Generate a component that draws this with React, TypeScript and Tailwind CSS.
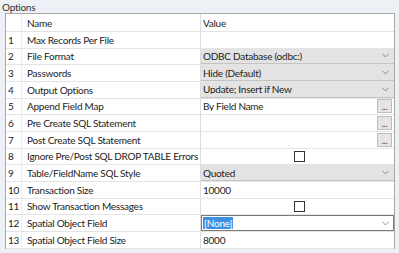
import { ChevronDown } from 'lucide-react';

type Kind = 'text' | 'combo' | 'ellipsis' | 'check' | 'focus';

interface OptionRow {
  name: string;
  value: string;
  kind: Kind;
}

const rows: OptionRow[] = [
  { name: 'Max Records Per File', value: '', kind: 'text' },
  { name: 'File Format', value: 'ODBC Database (odbc:)', kind: 'combo' },
  { name: 'Passwords', value: 'Hide (Default)', kind: 'combo' },
  { name: 'Output Options', value: 'Update; Insert if New', kind: 'combo' },
  { name: 'Append Field Map', value: 'By Field Name', kind: 'ellipsis' },
  { name: 'Pre Create SQL Statement', value: '', kind: 'ellipsis' },
  { name: 'Post Create SQL Statement', value: '', kind: 'ellipsis' },
  { name: 'Ignore Pre/Post SQL DROP TABLE Errors', value: '', kind: 'check' },
  { name: 'Table/FieldName SQL Style', value: 'Quoted', kind: 'combo' },
  { name: 'Transaction Size', value: '10000', kind: 'text' },
  { name: 'Show Transaction Messages', value: '', kind: 'check' },
  { name: 'Spatial Object Field', value: '[None]', kind: 'focus' },
  { name: 'Spatial Object Field Size', value: '8000', kind: 'text' },
];

function ValueCell({ row }: { row: OptionRow }) {
  // Combo box rows: grey fill with a chevron on the right
  if (row.kind === 'combo') {
    return (
      <div className="flex-1 h-full flex items-center bg-[#e3e3e3] border-b border-[#c4c4c4] pl-[2px] pr-[3px]">
        <span className="flex-1 truncate">{row.value}</span>
        <ChevronDown size={11} strokeWidth={1.5} className="text-[#606060]" />
      </div>
    );
  }

  // Focused combo with the text selected
  if (row.kind === 'focus') {
    return (
      <div className="flex-1 h-full flex items-center bg-white border border-[#7a7a7a] pl-[1px] pr-[2px]">
        <span className="flex-1">
          <span className="bg-[#3c8fe3] text-white px-px">{row.value}</span>
        </span>
        <ChevronDown size={11} strokeWidth={1.5} className="text-[#606060]" />
      </div>
    );
  }

  if (row.kind === 'check') {
    return (
      <div className="flex-1 h-full flex items-center justify-center pl-[4px]">
        <div className="w-[11px] h-[11px] border border-[#333] bg-white" />
      </div>
    );
  }

  if (row.kind === 'ellipsis') {
    return (
      <div className="flex-1 h-full flex items-center pl-[2px] pr-[2px]">
        <span className="flex-1 truncate">{row.value}</span>
        <div className="w-[15px] h-[14px] bg-[#e5e5e5] border border-[#bdbdbd] flex items-end justify-center text-[9px] leading-[9px] text-[#444] pb-[1px]">
          ...
        </div>
      </div>
    );
  }

  return (
    <div className="flex-1 h-full flex items-center pl-[2px]">
      <span>{row.value}</span>
    </div>
  );
}

export default function App() {
  return (
    <div className="w-[399px] h-[253px] bg-[#edf0f4] overflow-hidden font-['Lato',sans-serif] text-[10px] tracking-[-0.25px] text-[#222] leading-none">
      {/* Group title */}
      <div className="h-[13px] pl-[2px] pt-[2px] text-[#333]">Options</div>

      {/* Property grid */}
      <div className="ml-[5px] mr-[4px] bg-white border-t border-l border-r border-[#a8a8a8]">
        {/* Header */}
        <div className="flex h-[17px] items-center">
          <div className="w-[16px] h-full border-r border-[#ececec]" />
          <div className="w-[179px] h-full flex items-center pl-[5px] border-r border-[#dcdcdc]">Name</div>
          <div className="flex-1 pl-[2px]">Value</div>
        </div>

        {rows.map((row, i) => (
          <div key={row.name} className="flex h-[16.67px] border-t border-[#e4e4e4]">
            <div className="w-[16px] h-full flex items-center pl-[2px] border-r border-[#ececec]">{i + 1}</div>
            <div className="w-[179px] h-full flex items-center pl-[5px] border-r border-[#dcdcdc] whitespace-nowrap">
              {row.name}
            </div>
            <ValueCell row={row} />
          </div>
        ))}
        <div className="h-px border-t border-[#e4e4e4]" />
      </div>
    </div>
  );
}
